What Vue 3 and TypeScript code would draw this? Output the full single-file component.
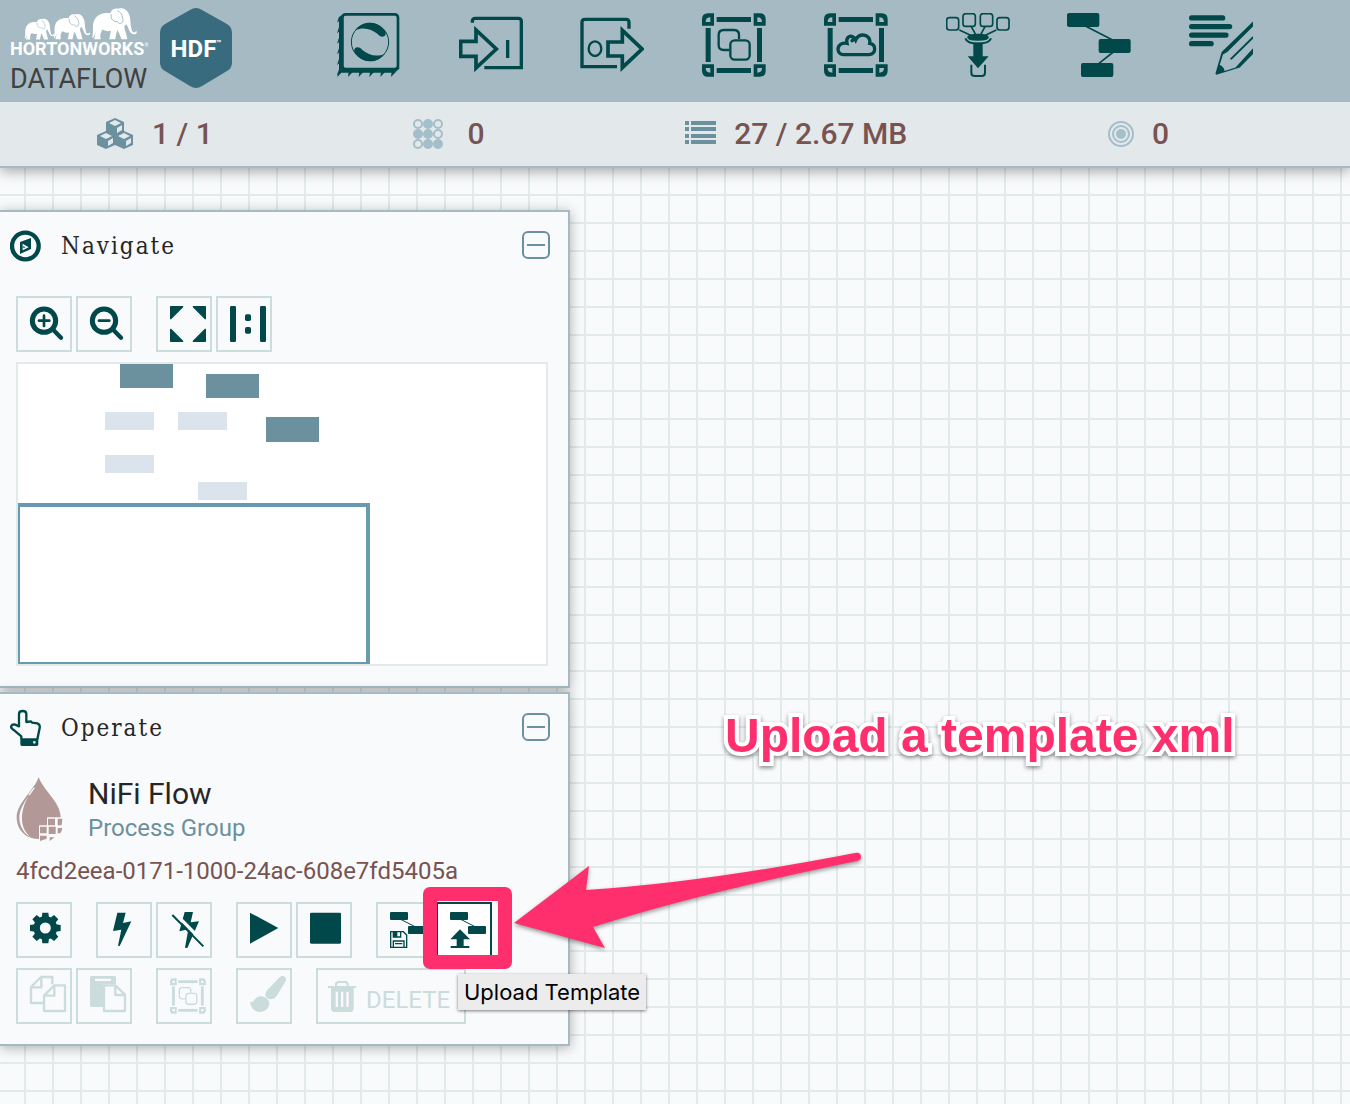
<script setup lang="ts">
import { ref } from 'vue'

interface Box { x: number; y: number; w: number; h: number; kind: 'group' | 'processor' }

// Components shown in the birdseye map, in map coordinates.
const boxes: Box[] = [
  { x: 102, y: -2, w: 53, h: 26, kind: 'group' },
  { x: 188, y: 10, w: 53, h: 24, kind: 'group' },
  { x: 248, y: 53, w: 53, h: 25, kind: 'group' },
  { x: 87, y: 48, w: 49, h: 18, kind: 'processor' },
  { x: 160, y: 48, w: 49, h: 18, kind: 'processor' },
  { x: 87, y: 91, w: 49, h: 18, kind: 'processor' },
  { x: 180, y: 118, w: 49, h: 18, kind: 'processor' },
]

const teeth = [0, 45, 90, 135, 180, 225, 270, 315]
const leftTeeth = [54, 86, 117, 149, 181, 212]
const bottomTeeth = [52, 84, 116, 148, 181, 213]
const swirlTurns = [0, 180]
const threadDots = [
  [0, 1, 0],
  [1, 1, 0],
  [0, 1, 1],
]

const navigateOpen = ref(true)
const operateOpen = ref(true)
</script>

<template>
  <div class="page">
    <svg class="defs" aria-hidden="true">
      <symbol id="elephant" viewBox="272 20 142 100">
        <path fill="#fff" d="M275 112C281 96 274 78 281 62C288 44 308 36 330 39C333 28 344 22 355 25C368 20 382 28 387 42C392 54 390 60 392 72C394 86 396 98 403 97C407 96 406 92 411 94C411 103 400 106 393 99C386 92 385 80 379 72L374 76C371 84 376 92 378 100L382 118H364L356 97L351 90L345 118H327L332 92C322 95 314 92 308 88C302 94 299 100 301 118H281L286 97L278 114Z" />
        <path fill="none" stroke="#a5bac3" stroke-width="3" d="M333 42C330 58 342 66 352 64C360 78 372 66 368 54C366 42 360 34 352 31" />
      </symbol>
      <symbol id="corner" viewBox="0 0 36 37" overflow="visible">
        <path fill="currentColor" fill-rule="evenodd" d="M0 37V18Q0 0 18 0H36V37ZM11 26H25V12Q11 12 11 26Z" />
      </symbol>
      <symbol id="frame" viewBox="66 39 192 192">
        <g fill="currentColor">
          <use href="#corner" x="66" y="40" width="36" height="37" />
          <use href="#corner" width="36" height="37" transform="translate(257 40) scale(-1 1)" />
          <use href="#corner" width="36" height="37" transform="translate(66 230) scale(1 -1)" />
          <use href="#corner" width="36" height="37" transform="translate(257 230) scale(-1 -1)" />
          <rect x="110" y="51" width="103" height="15" />
          <rect x="110" y="204" width="103" height="15" />
          <rect x="77" y="84" width="15" height="102" />
          <rect x="231" y="84" width="15" height="102" />
        </g>
      </symbol>
      <symbol id="group" viewBox="66 39 192 192">
        <use href="#frame" x="66" y="39" width="192" height="192" />
        <g fill="none" stroke="currentColor" stroke-width="7">
          <path d="M147 150H131Q116 150 116 136V105Q116 90 131 90H162Q177 90 177 105V117" />
          <rect x="151" y="121" width="58" height="58" rx="13" />
        </g>
      </symbol>
      <symbol id="cube" viewBox="0 0 20 18">
        <path fill="#6b909e" d="M10 0L19 4V14L10 18L1 14V4Z" />
        <path fill="#e3e8eb" d="M10 2L16 5L10 8L4 5ZM12 10L17 7V12L12 15Z" />
      </symbol>
      <symbol id="lens" viewBox="54 294 156 156">
        <g fill="none" stroke="currentColor" stroke-linecap="round">
          <circle cx="132" cy="362" r="35" stroke-width="15" />
          <path stroke-width="13" d="M161 391L183 413" />
          <path stroke-width="8" d="M117 362H148" />
        </g>
      </symbol>
    </svg>

    <header class="header">
      <a class="brand" href="#">
        <span class="words">
          <svg class="herd" viewBox="0 0 138 33" aria-hidden="true">
            <use href="#elephant" x="14" y="11" width="31" height="22" />
            <use href="#elephant" x="43" y="6" width="38" height="27" />
            <use href="#elephant" x="81" y="0" width="47" height="33" />
          </svg>
          <span class="company">HORTONWORKS<sup>®</sup></span>
          <span class="product">DATAFLOW</span>
        </span>
        <span class="hdf">
          <svg viewBox="0 0 72 82" aria-hidden="true"><path fill="#386b7e" d="M30 3Q36 -1 42 3L67 17Q72 20 72 26V56Q72 61 67 64L42 79Q36 83 30 79L5 64Q0 61 0 56V26Q0 20 5 17Z" /></svg>
          <span class="hdf-text">HDF<sup>™</sup></span>
        </span>
      </a>

      <nav class="tools" aria-label="Components">
        <button type="button" aria-label="Processor">
          <svg viewBox="51 39 192 192">
            <rect x="67" y="43" width="167" height="164" rx="10" fill="none" stroke="currentColor" stroke-width="8" />
            <path fill="currentColor" d="M57 52L70 42V204H234L238 200V206L224 218H57Z" />
            <path v-for="y in leftTeeth" :key="'l' + y" fill="currentColor" :d="`M58 ${y - 7}V${y + 8}L51 ${y + 14}Z`" />
            <path v-for="x in bottomTeeth" :key="'b' + x" fill="currentColor" :d="`M${x + 2} 216H${x + 14}L${x} 231Z`" />
            <circle cx="150" cy="126" r="56" fill="none" stroke="currentColor" stroke-width="3" />
            <path v-for="turn in swirlTurns" :key="turn" fill="currentColor" :transform="`rotate(${turn} 150 126)`" d="M106 91C124 64 164 60 187 84C201 94 200 109 188 110C180 110 178 106 172 101C155 87 130 79 106 91Z" />
          </svg>
        </button>
        <button type="button" aria-label="Input port">
          <svg viewBox="414 39 192 192" fill="none" stroke="currentColor" stroke-width="10">
            <path d="M454 68V64Q454 55 463 55H592Q601 55 601 64V203H490" />
            <path stroke-width="11" d="M419 124H465V90L526 147L465 204V169H419Z" />
            <path d="M560 120V174" />
          </svg>
        </button>
        <button type="button" aria-label="Output port">
          <svg viewBox="779 39 192 192" fill="none" stroke="currentColor" stroke-width="10">
            <path d="M926 86V67Q926 58 917 58H794Q785 58 785 67V200H890" />
            <ellipse cx="824" cy="146" rx="19" ry="22" stroke-width="7" />
            <path stroke-width="11" d="M863 126H906V91L965 147L906 203V168H863Z" />
          </svg>
        </button>
        <button type="button" aria-label="Process group">
          <svg viewBox="66 39 192 192"><use href="#group" x="66" y="39" width="192" height="192" /></svg>
        </button>
        <button type="button" aria-label="Remote process group">
          <svg viewBox="430 39 192 192">
            <use href="#frame" x="430" y="39" width="192" height="192" />
            <path fill="none" stroke="currentColor" stroke-width="10" stroke-linecap="round" d="M489 164H566C577 163 582 155 582 147C582 137 576 131 567 130C570 115 560 105 547 105C537 105 529 111 525 120C519 108 508 106 502 112C497 118 498 126 499 130C485 127 473 134 472 147C472 157 479 164 489 164ZM514 122Q519 116 525 120" />
          </svg>
        </button>
        <button type="button" aria-label="Funnel">
          <svg viewBox="797 39 192 192" fill="none" stroke="currentColor" stroke-width="5">
            <rect x="799" y="53" width="36" height="37" rx="8" />
            <rect x="848" y="41" width="37" height="38" rx="8" />
            <rect x="900" y="41" width="37" height="38" rx="8" />
            <rect x="950" y="53" width="36" height="37" rx="8" />
            <path d="M837 90L874 107M873 80L886 104M914 80L901 104M948 90L912 107" />
            <ellipse cx="893" cy="112" rx="30" ry="8" fill="currentColor" />
            <path stroke-width="6" d="M855 115C862 136 926 136 932 115" />
            <path fill="currentColor" stroke="none" d="M879 128H907V169H925L893 205L862 169H879Z" />
            <path stroke-width="6" d="M873 194V218Q873 228 883 228H904Q914 228 914 218V194" />
          </svg>
        </button>
        <button type="button" aria-label="Template">
          <svg viewBox="83 39 192 192" fill="currentColor">
            <rect x="83" y="39" width="97" height="42" rx="6" />
            <rect x="178" y="117" width="96" height="42" rx="6" />
            <rect x="125" y="189" width="97" height="42" rx="6" />
            <path fill="none" stroke="currentColor" stroke-width="5" d="M138 78L220 120M222 156L178 191" />
          </svg>
        </button>
        <button type="button" aria-label="Label">
          <svg viewBox="447 39 194 192" fill="currentColor">
            <rect x="447" y="45" width="110" height="16" rx="8" />
            <rect x="447" y="71" width="131" height="16" rx="8" />
            <rect x="447" y="97" width="120" height="16" rx="8" />
            <rect x="447" y="123" width="75" height="16" rx="8" />
            <path d="M641 64V79L563 156L550 164L540 196Q552 200 555 214L588 203L641 145V162L601 203L530 225L527 222L546 156ZM641 108V116L576 180L571 177Z" />
          </svg>
        </button>
      </nav>
    </header>

    <section class="status" aria-label="Flow status">
      <div class="stat">
        <svg width="38" height="32" viewBox="0 0 38 32" aria-hidden="true">
          <use href="#cube" x="9" y="0" width="20" height="18" />
          <use href="#cube" x="0" y="13" width="20" height="18" />
          <use href="#cube" x="18" y="13" width="20" height="18" />
        </svg>
        <span>1 / 1</span>
      </div>
      <div class="stat wide">
        <svg width="30" height="32" viewBox="0 0 30 32" aria-hidden="true">
          <template v-for="(row, r) in threadDots" :key="r">
            <circle v-for="(on, c) in row" :key="c" :cx="5 + c * 10" :cy="6 + r * 10" r="4" :fill="on ? '#a3bfca' : 'none'" stroke="#a3bfca" stroke-width="2" />
          </template>
        </svg>
        <span>0</span>
      </div>
      <div class="stat">
        <svg width="31" height="32" viewBox="0 0 31 32" fill="#6b909e" aria-hidden="true">
          <path d="M0 3H4V7H0ZM6 3H31V7H6ZM0 9H4V13H0ZM6 9H31V13H6ZM0 16H4V20H0ZM6 16H31V20H6ZM0 22H4V26H0ZM6 22H31V26H6Z" />
        </svg>
        <span>27 / 2.67 MB</span>
      </div>
      <div class="stat">
        <svg width="26" height="32" viewBox="0 0 26 32" aria-hidden="true">
          <g fill="none" stroke="#a3bfca" stroke-width="2">
            <circle cx="13" cy="16" r="12" />
            <circle cx="13" cy="16" r="8" />
          </g>
          <circle cx="13" cy="16" r="5" fill="#a3bfca" />
        </svg>
        <span>0</span>
      </div>
    </section>

    <main class="canvas">
      <aside class="panels">
        <section class="panel">
          <div class="title">
            <svg width="32" height="38" viewBox="30 82 96 114" aria-hidden="true">
              <circle cx="76" cy="139" r="40" fill="none" stroke="#004849" stroke-width="13" />
              <path fill="#004849" fill-rule="evenodd" d="M60 127L93 115V148L60 163ZM68 132V152L86 143Z" />
              <path fill="#004849" d="M70 139L76 143L70 146Z" />
            </svg>
            <h2>Navigate</h2>
            <button class="collapse" type="button" aria-label="Collapse Navigate" :aria-expanded="navigateOpen" @click="navigateOpen = !navigateOpen"></button>
          </div>
          <div v-show="navigateOpen" class="body navigate">
            <div class="row">
              <div class="set">
                <button class="action" type="button" aria-label="Zoom in">
                  <svg viewBox="54 294 156 156"><use href="#lens" x="54" y="294" width="156" height="156" /><path stroke="currentColor" stroke-width="8" stroke-linecap="round" d="M132 347V378" /></svg>
                </button>
                <button class="action" type="button" aria-label="Zoom out">
                  <svg viewBox="54 294 156 156"><use href="#lens" x="54" y="294" width="156" height="156" /></svg>
                </button>
              </div>
              <div class="set">
                <button class="action" type="button" aria-label="Fit">
                  <svg viewBox="474 294 156 156" fill="currentColor" stroke="currentColor" stroke-width="4" stroke-linejoin="round"><path d="M512 320H548L512 356ZM616 320H580L616 356ZM512 424V388L548 424ZM616 424H580L616 388Z" /></svg>
                </button>
                <button class="action" type="button" aria-label="Actual size">
                  <svg viewBox="654 294 156 156" fill="currentColor">
                    <rect x="690" y="318" width="18" height="108" rx="4" />
                    <rect x="780" y="318" width="18" height="108" rx="4" />
                    <rect x="735" y="343" width="18" height="20" rx="5" />
                    <rect x="735" y="381" width="18" height="20" rx="5" />
                  </svg>
                </button>
              </div>
            </div>
            <svg class="birdseye" viewBox="0 0 528 300" role="img" aria-label="Flow overview">
              <rect v-for="(b, i) in boxes" :key="i" :x="b.x" :y="b.y" :width="b.w" :height="b.h" :fill="b.kind === 'group' ? '#6b909e' : '#dbe3ec'" />
              <path fill="#6799b0" fill-rule="evenodd" d="M0 139H352V300H0ZM2 143V298H348V143Z" />
            </svg>
          </div>
        </section>

        <section class="panel">
          <div class="title">
            <svg width="32" height="38" viewBox="30 57 96 114" aria-hidden="true">
              <path fill="none" stroke="#004849" stroke-width="7" stroke-linejoin="round" d="M64 148V139L40 119C28 112 34 101 46 104L57 109V72C57 60 79 60 79 72V96L93 94L96 98L112 100Q121 103 119 114L112 148" />
              <path fill="#004849" fill-rule="evenodd" d="M61 145H115V163Q115 168 110 168H66Q61 168 61 163ZM99 157A4 4 0 0 0 107 157A4 4 0 0 0 99 157Z" />
            </svg>
            <h2>Operate</h2>
            <button class="collapse" type="button" aria-label="Collapse Operate" :aria-expanded="operateOpen" @click="operateOpen = !operateOpen"></button>
          </div>
          <div v-show="operateOpen" class="body">
            <div class="context">
              <svg width="48" height="66" viewBox="49 252 144 198" aria-hidden="true">
                <path fill="#b29897" d="M117 255C130 295 183 330 183 376H142V400H118V441C80 442 51 415 51 376C51 332 104 295 117 255Z" />
                <path fill="none" stroke="#f8f9fb" stroke-width="4" d="M104 287L88 309" />
                <path fill="#f8f9fb" d="M88 311C70 335 58 356 59 380C60 405 75 427 95 436C78 425 67 404 67 380C67 354 74 334 88 311Z" />
                <path fill="#b29897" d="M145 380H166V400H145ZM174 380H188L186 400H174ZM121 404H141V424H121ZM147 404H168V426H147ZM174 408H188Q187 416 182 424H174ZM121 431H141V440L121 447ZM150 436H165L150 447Z" />
              </svg>
              <div>
                <p class="name">NiFi Flow</p>
                <p class="type">Process Group</p>
              </div>
            </div>
            <p class="id">4fcd2eea-0171-1000-24ac-608e7fd5405a</p>
            <div class="row">
              <div class="set">
                <button class="action" type="button" aria-label="Configuration">
                  <svg viewBox="54 42 156 156">
                    <circle cx="136" cy="114" r="26" fill="none" stroke="currentColor" stroke-width="19" />
                    <path v-for="a in teeth" :key="a" fill="currentColor" :transform="`rotate(${a} 136 114)`" d="M125 84L127 68H145L147 84Z" />
                  </svg>
                </button>
              </div>
              <div class="set">
                <button class="action" type="button" aria-label="Enable">
                  <svg viewBox="294 42 156 156"><path fill="currentColor" d="M352 68H377L369 99L394 94L359 168L354 167L364 119L339 123Z" /></svg>
                </button>
                <button class="action" type="button" aria-label="Disable">
                  <svg viewBox="474 42 156 156">
                    <path fill="currentColor" d="M554 66H579L572 97L597 94L562 174L555 173L565 118L538 124Z" />
                    <path stroke="#f9fafc" stroke-width="10" d="M523 68L616 162" />
                    <path stroke="currentColor" stroke-width="6" d="M517 75L610 169" />
                  </svg>
                </button>
              </div>
              <div class="set">
                <button class="action" type="button" aria-label="Start">
                  <svg viewBox="714 42 156 156"><path fill="currentColor" d="M750 68L835 114L750 161Z" /></svg>
                </button>
                <button class="action" type="button" aria-label="Stop">
                  <svg viewBox="894 42 156 156"><rect x="930" y="68" width="93" height="93" rx="4" fill="currentColor" /></svg>
                </button>
              </div>
              <div class="set">
                <button class="action" type="button" aria-label="Create Template">
                  <svg viewBox="234 192 156 156" fill="currentColor">
                    <rect x="270" y="216" width="54" height="24" rx="3" />
                    <rect x="324" y="258" width="54" height="24" rx="3" />
                    <path fill="none" stroke="currentColor" stroke-width="3" d="M302 238L345 260" />
                    <path fill="none" stroke="currentColor" stroke-width="4" d="M272 275H310L320 285V322H272ZM280 322V303H312V322M280 275V291H302V275M285 311H307" />
                    <path d="M280 275H292V291H280Z" />
                  </svg>
                </button>
                <div class="focus">
                  <button class="action active" type="button" aria-label="Upload Template" aria-describedby="tip">
                    <svg viewBox="414 192 156 156" fill="currentColor">
                      <rect x="450" y="216" width="54" height="24" rx="3" />
                      <rect x="504" y="258" width="54" height="24" rx="3" />
                      <path fill="none" stroke="currentColor" stroke-width="3" d="M482 238L525 260" />
                      <path d="M480 268L510 298H491V318H470V298H451ZM452 318H508V324H452Z" />
                    </svg>
                  </button>
                  <span class="ring"></span>
                  <span id="tip" class="tooltip" role="tooltip">Upload Template</span>
                  <svg class="arrow" width="360" height="110" viewBox="510 850 360 110" aria-hidden="true">
                    <path fill="#ff2f6d" d="M514 923L589 866L586 890Q700 883 855 853Q861 852 861 857Q861 860 857 861Q700 893 593 927L605 948Z" />
                  </svg>
                </div>
              </div>
            </div>
            <div class="row second">
              <div class="set">
                <button class="action" type="button" aria-label="Copy" disabled>
                  <svg viewBox="54 240 156 156" fill="none" stroke="currentColor" stroke-width="7" stroke-linejoin="round">
                    <path d="M157 283V261H123L93 291V339H131M93 292H124V261" />
                    <path d="M132 317L163 286H195V363H132ZM132 317H163V286" />
                  </svg>
                </button>
                <button class="action" type="button" aria-label="Paste" disabled>
                  <svg viewBox="234 240 156 156">
                    <path fill="currentColor" fill-rule="evenodd" d="M270 346V263Q270 258 275 258H343Q348 258 348 263V282H309V351H275Q270 351 270 346ZM285 266V273H333V266Z" />
                    <path fill="#f9fafc" stroke="currentColor" stroke-width="7" stroke-linejoin="round" d="M312 286H346L375 314V363H312ZM346 286V315H375" />
                  </svg>
                </button>
              </div>
              <div class="set">
                <button class="action" type="button" aria-label="Group" disabled>
                  <svg viewBox="474 240 156 156"><use href="#group" x="510" y="264" width="108" height="108" /></svg>
                </button>
              </div>
              <div class="set">
                <button class="action" type="button" aria-label="Change color" disabled>
                  <svg viewBox="714 240 156 156" fill="currentColor">
                    <path d="M839 262C849 253 862 262 857 274L830 318C822 331 806 330 799 322C794 316 796 306 802 300Z" />
                    <path d="M750 334C760 344 762 322 776 320C790 316 808 326 808 340C808 356 795 366 779 366C762 366 751 352 750 334Z" />
                  </svg>
                </button>
              </div>
              <div class="set">
                <button class="action delete" type="button" disabled>
                  <svg viewBox="84 420 84 99" aria-hidden="true">
                    <path fill="none" stroke="currentColor" stroke-width="6" d="M108 440V434Q108 426 116 426H135Q143 426 143 434V440" />
                    <path fill="currentColor" fill-rule="evenodd" d="M84 438H168V444H161V505Q161 516 150 516H104Q93 516 93 505V444H84ZM107 455V501H114V455ZM123 455V501H130V455ZM139 455V501H146V455Z" />
                  </svg>
                  <span>DELETE</span>
                </button>
              </div>
            </div>
          </div>
        </section>
      </aside>
      <p class="note">Upload a template xml</p>
    </main>
  </div>
</template>

<style>
body {
  margin: 0;
}
</style>

<style scoped>
.page {
  display: flex;
  flex-direction: column;
  min-height: 100vh;
  overflow: hidden;
  font-family: Roboto, "Liberation Sans", sans-serif;
  color: #262626;
}
.defs {
  position: absolute;
  width: 0;
  height: 0;
}
svg {
  display: block;
  flex: none;
}
button {
  padding: 0;
  border: 0;
  background: none;
  font: inherit;
  color: #004849;
}
h2,
p {
  margin: 0;
}
.header {
  position: relative;
  z-index: 2;
  display: flex;
  height: 102px;
  background: #a5bac3;
}
.brand {
  display: flex;
  gap: 12px;
  box-sizing: border-box;
  width: 308px;
  padding: 7px 0 0 10px;
  color: #fff;
  text-decoration: none;
}
.words {
  display: flex;
  flex-direction: column;
  width: 138px;
}
.herd {
  width: 138px;
  height: 33px;
}
.company {
  font-size: 18px;
  line-height: 18px;
  font-weight: 700;
  white-space: nowrap;
}
.company sup {
  font-size: 5px;
  line-height: 1;
  font-weight: 400;
  vertical-align: 8px;
}
.product {
  margin-top: 6px;
  font-size: 27px;
  line-height: 30px;
  color: #414141;
}
.hdf {
  display: grid;
  place-items: center;
  width: 72px;
  height: 82px;
}
.hdf > * {
  grid-area: 1 / 1;
}
.hdf svg {
  width: 72px;
  height: 82px;
}
.hdf-text {
  padding-top: 2px;
  font-size: 24px;
  font-weight: 700;
  line-height: 30px;
}
.hdf-text sup {
  font-size: 8px;
  line-height: 1;
  vertical-align: 11px;
}
.tools {
  display: flex;
  flex: 1;
  margin-right: 68px;
  padding-top: 13px;
}
.tools button {
  display: flex;
  flex: 1;
  justify-content: center;
  height: 64px;
}
.tools svg {
  width: 64px;
  height: 64px;
}
.status {
  position: relative;
  display: flex;
  justify-content: space-between;
  align-items: center;
  height: 64px;
  padding: 0 181px 0 96px;
  border-bottom: 2px solid #a5bac3;
  background: #e3e8eb;
  box-shadow: 0 2px 14px rgba(0, 0, 0, 0.4);
  z-index: 1;
}
.stat {
  display: flex;
  align-items: center;
  gap: 18px;
  font-size: 30px;
  line-height: 36px;
  font-weight: 500;
  color: #775351;
}
.stat.wide {
  gap: 24px;
}
.canvas {
  position: relative;
  flex: 1;
  background-color: #f9fafc;
  background-image: linear-gradient(#e3eaea 2px, transparent 2px), linear-gradient(90deg, #e3eaea 2px, transparent 2px);
  background-size: 28px 28px;
  background-position: 24px 26px;
}
.panels {
  display: flex;
  flex-direction: column;
  gap: 4px;
  width: 570px;
  padding: 42px 0 58px;
}
.panel {
  border: 2px solid #a5bac3;
  border-left: 0;
  background: rgba(249, 250, 252, 0.97);
  box-shadow: 0 2px 12px rgba(0, 0, 0, 0.3);
}
.title {
  display: flex;
  align-items: center;
  gap: 19px;
  height: 66px;
  padding: 0 18px 0 10px;
}
.title svg,
.title h2 {
  padding-top: 2px;
}
.title h2 {
  flex: 1;
  font-family: "Roboto Slab", "DejaVu Serif Condensed", "DejaVu Serif", serif;
  font-size: 24px;
  line-height: 28px;
  font-weight: 400;
  letter-spacing: 2px;
}
.collapse {
  display: grid;
  place-items: center;
  width: 28px;
  height: 28px;
  border: 2px solid #6b909e;
  border-radius: 6px;
}
.collapse::before {
  content: "";
  width: 18px;
  height: 2px;
  background: #6b909e;
}
.body {
  padding: 16px 20px 20px 16px;
}
.body.navigate {
  padding-top: 18px;
}
.row {
  display: flex;
  gap: 24px;
}
.row.second {
  margin-top: 10px;
}
.set {
  display: flex;
  gap: 4px;
}
.action {
  display: flex;
  box-sizing: border-box;
  width: 56px;
  height: 56px;
  border: 2px solid #cbdcdc;
}
.action svg {
  width: 52px;
  height: 52px;
}
.action:disabled {
  color: #cbdcdc;
}
.action.active {
  border-color: #004849;
  background: #fff;
}
.action.delete {
  align-items: center;
  gap: 10px;
  width: 150px;
  padding-left: 10px;
  font-size: 24px;
  line-height: 28px;
}
.action.delete svg {
  width: 28px;
  height: 33px;
}
.action.delete span {
  padding-top: 8px;
}
.birdseye {
  box-sizing: border-box;
  width: 100%;
  margin-top: 10px;
  border: 2px solid #e3eaea;
  background: #fff;
}
.context {
  display: flex;
  gap: 24px;
}
.name {
  font-size: 30px;
  line-height: 36px;
}
.type {
  font-size: 24px;
  line-height: 32px;
  color: #6b909e;
}
.id {
  margin: 12px 0 16px;
  font-size: 24px;
  line-height: 30px;
  color: #775351;
}
.focus {
  position: relative;
}
.ring {
  position: absolute;
  top: -15px;
  left: -13px;
  width: 61px;
  height: 54px;
  border: 14px solid #ff2f6d;
  border-radius: 7px;
}
.tooltip {
  position: absolute;
  z-index: 1;
  top: 72px;
  left: 22px;
  padding: 0 6px;
  background: #ececec;
  box-shadow: 0 1px 3px rgba(0, 0, 0, 0.5);
  font-family: Inter, sans-serif;
  font-size: 22px;
  line-height: 36px;
  color: #000;
  white-space: nowrap;
}
.arrow {
  position: absolute;
  z-index: 1;
  top: -52px;
  left: 74px;
  filter: drop-shadow(0 2px 2px rgba(0, 0, 0, 0.4));
  pointer-events: none;
}
.note {
  position: absolute;
  top: 540px;
  left: 725px;
  font-family: "Liberation Sans", Arial, sans-serif;
  font-size: 48px;
  line-height: 56px;
  font-weight: 700;
  color: #ff2f6d;
  white-space: nowrap;
  -webkit-text-stroke: 8px #fff;
  paint-order: stroke fill;
  filter: drop-shadow(0 2px 2px rgba(0, 0, 0, 0.45));
}
</style>
